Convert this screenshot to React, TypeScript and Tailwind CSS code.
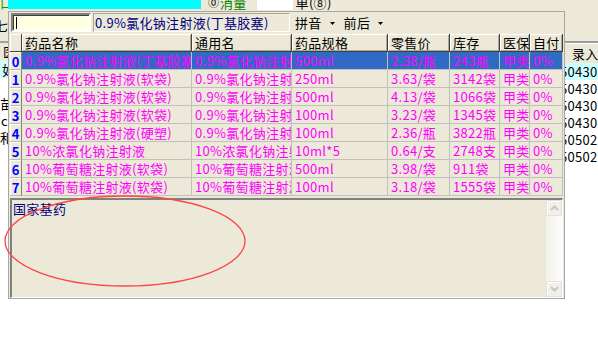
import React from 'react'

type Drug = {
  name: string
  generic: string
  spec: string
  price: string
  stock: string
  ins: string
  self: string
}

const drugs: Drug[] = [
  { name: '0.9%氯化钠注射液(丁基胶塞)', generic: '0.9%氯化钠注射液(丁基胶塞)', spec: '500ml', price: '2.38/瓶', stock: '243瓶', ins: '甲类', self: '0%' },
  { name: '0.9%氯化钠注射液(软袋)', generic: '0.9%氯化钠注射液(软袋)', spec: '250ml', price: '3.63/袋', stock: '3142袋', ins: '甲类', self: '0%' },
  { name: '0.9%氯化钠注射液(软袋)', generic: '0.9%氯化钠注射液(软袋)', spec: '500ml', price: '4.13/袋', stock: '1066袋', ins: '甲类', self: '0%' },
  { name: '0.9%氯化钠注射液(软袋)', generic: '0.9%氯化钠注射液(软袋)', spec: '100ml', price: '3.23/袋', stock: '1345袋', ins: '甲类', self: '0%' },
  { name: '0.9%氯化钠注射液(硬塑)', generic: '0.9%氯化钠注射液(硬塑)', spec: '100ml', price: '2.36/瓶', stock: '3822瓶', ins: '甲类', self: '0%' },
  { name: '10%浓氯化钠注射液', generic: '10%浓氯化钠注射液', spec: '10ml*5', price: '0.64/支', stock: '2748支', ins: '甲类', self: '0%' },
  { name: '10%葡萄糖注射液(软袋)', generic: '10%葡萄糖注射液(软袋)', spec: '500ml', price: '3.98/袋', stock: '911袋', ins: '甲类', self: '0%' },
  { name: '10%葡萄糖注射液(软袋)', generic: '10%葡萄糖注射液(软袋)', spec: '100ml', price: '3.18/袋', stock: '1555袋', ins: '甲类', self: '0%' },
]

const columns: { key: keyof Drug; label: string; width: string }[] = [
  { key: 'name', label: '药品名称', width: 'w-[170px]' },
  { key: 'generic', label: '通用名', width: 'w-[100px]' },
  { key: 'spec', label: '药品规格', width: 'w-[96px]' },
  { key: 'price', label: '零售价', width: 'w-[62px]' },
  { key: 'stock', label: '库存', width: 'w-[50px]' },
  { key: 'ins', label: '医保', width: 'w-[30px]' },
  { key: 'self', label: '自付', width: 'w-[33px]' },
]

const rightRows = ['50430', '50430', '50430', '50430', '50502', '50502']

const DownTri = ({ className = '' }: { className?: string }) => (
  <svg width="5" height="3" viewBox="0 0 5 3" className={className}>
    <polygon points="0,0 5,0 2.5,3" fill="#000" />
  </svg>
)

const ScrollButton = ({ up }: { up?: boolean }) => (
  <div className="h-[16px] w-[16px] rounded-[2px] border border-[#E4E2D8] bg-[#F1F0EA] shadow-[inset_1px_1px_0_#ffffff] flex items-center justify-center">
    <svg width="9" height="6" viewBox="0 0 9 6">
      <path
        d={up ? 'M1 5 L4.5 1.5 L8 5' : 'M1 1 L4.5 4.5 L8 1'}
        fill="none"
        stroke="#C9C7BB"
        strokeWidth="2"
      />
    </svg>
  </div>
)

const App: React.FC = () => {
  return (
    <div
      className="relative w-[598px] h-[337px] overflow-hidden bg-white text-[13px] text-black tracking-[0.3px]"
      style={{ fontFamily: '"Noto Sans CJK SC", "Noto Sans", sans-serif' }}
    >
      {/* 背后窗口顶部 */}
      <div className="h-[11px] bg-[#ECE9D8] flex overflow-hidden leading-[13px]">
        <div className="w-[8px] shrink-0 -mt-[4px] text-[#00A000]">口</div>
        <div className="w-[193px] h-[9px] shrink-0 bg-[#00FFFF]" />
        <div className="ml-[7px] -mt-[4px] flex shrink-0">
          <span className="w-[12px] text-[11px]">⓪</span>
          <span className="text-[#008000]">消量</span>
        </div>
        <div className="ml-[10px] w-[36px] h-[10px] shrink-0 bg-white" />
        <div className="ml-[3px] -mt-[4px] shrink-0">单(⑧)</div>
      </div>

      <div className="flex h-[288px]">
        {/* 左侧被遮住的表格 */}
        <div className="w-[8px] shrink-0 overflow-hidden flex flex-col leading-[17px]">
          <div className="h-[30px] bg-[#ECE9D8] leading-[30px] -ml-[5px]">七</div>
          <div className="h-[2px] bg-[#A0A0A0]" />
          <div className="h-[18px] bg-[#ECE9D8] pl-[3px] leading-[18px]">医</div>
          <div className="h-[17px] bg-[#CCFFFF] pl-[2px]">如</div>
          <div className="h-[17px]" />
          <div className="h-[17px]">苗</div>
          <div className="h-[17px] pl-[1px]">cl</div>
          <div className="h-[17px]">和</div>
          <div className="flex-1" />
        </div>

        {/* 下拉选择窗口 */}
        <div className="w-[557px] h-[288px] shrink-0 border border-[#A7A6AA] bg-[#ECE9D8] flex flex-col">
          <div className="h-[22px] flex items-start shrink-0">
            <div className="ml-[2px] mt-[1px] w-[80px] h-[19px] bg-[#FFFFE1] border-2 border-t-[#808080] border-l-[#808080] border-b-white border-r-white shadow-[inset_1px_1px_0_#404040]">
              <div className="ml-[3px] mt-[2px] w-px h-[12px] bg-black" />
            </div>
            <div className="ml-[2px] mt-[1px] w-[197px] h-[19px] border border-t-[#ACA899] border-l-[#ACA899] border-b-white border-r-white pl-[1px] text-[#000080] leading-[17px] whitespace-nowrap overflow-hidden">
              0.9%氯化钠注射液(丁基胶塞)
            </div>
            <div className="ml-[5px] h-[22px] flex items-center">
              <span>拼音</span>
              <DownTri className="ml-[8px]" />
              <span className="ml-[9px]">前后</span>
              <DownTri className="ml-[8px]" />
            </div>
          </div>

          {/* 药品表格 */}
          <div className="ml-[1px] w-[553px] shrink-0">
            <div className="flex h-[18px]">
              <div className="w-[12px] shrink-0 bg-[#ECE9D8] border-r border-b border-[#404040] shadow-[inset_1px_1px_0_#ffffff]" />
              {columns.map((col) => (
                <div
                  key={col.key}
                  className={`${col.width} shrink-0 h-[18px] pl-[3px] leading-[17px] whitespace-nowrap overflow-hidden bg-[#ECE9D8] border-r border-b border-[#404040] shadow-[inset_1px_1px_0_#ffffff,inset_-1px_-1px_0_#ACA899]`}
                >
                  {col.label}
                </div>
              ))}
            </div>
            {drugs.map((drug, i) => (
              <div key={i} className="flex h-[18px]">
                <div className="w-[12px] shrink-0 bg-[#ECE9D8] border-r border-b border-r-[#808080] border-b-[#BDBAAE] shadow-[inset_1px_1px_0_#ffffff] text-center font-bold text-[#0000FF] leading-[19px] tracking-normal">
                  {i}
                </div>
                {columns.map((col) => (
                  <div
                    key={col.key}
                    className={`${col.width} shrink-0 h-[18px] pl-[3px] leading-[18px] whitespace-nowrap overflow-hidden text-[#FF00FF] border-r border-b border-[#C0C0C0] ${
                      i === 0 ? 'bg-[#316AC5]' : ''
                    }`}
                  >
                    {drug[col.key]}
                  </div>
                ))}
              </div>
            ))}
          </div>

          {/* 备注 */}
          <div className="ml-[1px] mt-[2px] w-[553px] h-[100px] shrink-0 flex border-t-2 border-l-2 border-r border-b border-t-[#808080] border-l-[#808080] border-r-white border-b-white">
            <div className="flex-1 pl-[1px] pt-[1px] text-[#000080] leading-[15px]">国家基药</div>
            <div className="w-[16px] flex flex-col">
              <ScrollButton up />
              <div className="flex-1 bg-gradient-to-r from-[#F1F0EA] to-[#FEFEFD]" />
              <ScrollButton />
            </div>
          </div>
        </div>

        {/* 右侧被遮住的表格 */}
        <div className="flex-1 overflow-hidden flex flex-col leading-[17px]">
          <div className="h-[30px] bg-[#ECE9D8]" />
          <div className="h-[2px] bg-[#9D9D9D]" />
          <div className="h-px bg-white" />
          <div className="h-[19px] bg-[#ECE9D8] pl-[7px] leading-[19px] whitespace-nowrap">录入</div>
          {rightRows.map((v, i) => (
            <div
              key={i}
              className={`h-[17px] -ml-[5px] whitespace-nowrap ${i === 0 ? 'bg-[#CCFFFF]' : 'bg-white'}`}
            >
              {v}
            </div>
          ))}
          <div className="flex-1" />
        </div>
      </div>

      {/* 红色标注圈 */}
      <svg className="absolute left-0 top-0 pointer-events-none" width="598" height="337">
        <ellipse cx="125" cy="241" rx="120" ry="45" fill="none" stroke="#FF4444" strokeWidth="1.3" />
      </svg>
    </div>
  )
}

export default App
